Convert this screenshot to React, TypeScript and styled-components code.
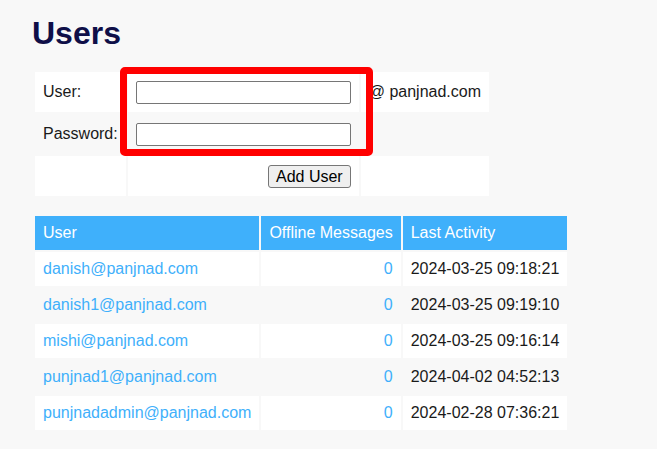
import React from "react";
import styled, { createGlobalStyle } from "styled-components";

const Global = createGlobalStyle`
  html, body {
    margin: 0;
    padding: 0;
    background: #f8f8f8;
    font-family: "Liberation Sans", Arial, sans-serif;
    font-size: 16px;
    color: #1a1a1a;
  }
`;

const Page = styled.div`
  padding: 15px 0 0 33px;
`;

const Title = styled.h1`
  margin: 0 0 18px -1px;
  font-size: 32px;
  line-height: 37px;
  font-weight: bold;
  color: #0f0f48;
`;

const FormWrap = styled.div`
  position: relative;
  width: fit-content;
  margin-bottom: 16px;
`;

const Table = styled.table`
  border-collapse: separate;
  border-spacing: 2px;
`;

const Row = styled.tr<{ $alt?: boolean }>`
  background: ${(p) => (p.$alt ? "transparent" : "#ffffff")};
`;

const FormCell = styled.td<{ $right?: boolean }>`
  height: 24px;
  padding: 8px;
  vertical-align: middle;
  text-align: ${(p) => (p.$right ? "right" : "left")};
  white-space: nowrap;
`;

const TextInput = styled.input`
  box-sizing: border-box;
  width: 215px;
  height: 23px;
  margin: 0;
  padding: 1px 2px;
  border: 1px solid #767676;
  border-radius: 2px;
  background: #fff;
  font: inherit;
  vertical-align: middle;
`;

const Button = styled.button`
  box-sizing: border-box;
  height: 23px;
  margin: 0;
  padding: 0 7px;
  border: 1px solid #767676;
  border-radius: 3px;
  background: #efefef;
  color: #000;
  font-family: "Liberation Sans", Arial, sans-serif;
  font-size: 16px;
  line-height: 21px;
  vertical-align: middle;
`;

const Highlight = styled.div`
  position: absolute;
  left: 87px;
  top: -3px;
  width: 253px;
  height: 89px;
  box-sizing: border-box;
  border: 7px solid #ff0000;
  border-radius: 5px;
  pointer-events: none;
`;

const Head = styled.th`
  background: #3fb0fb;
  color: #ffffff;
  font-weight: normal;
  text-align: left;
  padding: 8px;
  line-height: 18px;
  white-space: nowrap;
`;

const Cell = styled.td<{ $right?: boolean }>`
  padding: 8px;
  line-height: 18px;
  text-align: ${(p) => (p.$right ? "right" : "left")};
  white-space: nowrap;
`;

const Link = styled.a`
  color: #3fb0fb;
  text-decoration: none;
`;

const users = [
  { user: "danish@panjnad.com", offline: 0, last: "2024-03-25 09:18:21" },
  { user: "danish1@panjnad.com", offline: 0, last: "2024-03-25 09:19:10" },
  { user: "mishi@panjnad.com", offline: 0, last: "2024-03-25 09:16:14" },
  { user: "punjnad1@panjnad.com", offline: 0, last: "2024-04-02 04:52:13" },
  { user: "punjnadadmin@panjnad.com", offline: 0, last: "2024-02-28 07:36:21" },
];

export default function App() {
  return (
    <>
      <Global />
      <Page>
        <Title>Users</Title>
        <FormWrap>
          <Table>
            <tbody>
              <Row>
                <FormCell>User:</FormCell>
                <FormCell>
                  <TextInput type="text" />
                </FormCell>
                <FormCell>@ panjnad.com</FormCell>
              </Row>
              <Row $alt>
                <FormCell>Password:</FormCell>
                <FormCell>
                  <TextInput type="password" />
                </FormCell>
                <FormCell />
              </Row>
              <Row>
                <FormCell />
                <FormCell $right>
                  <Button type="button">Add User</Button>
                </FormCell>
                <FormCell />
              </Row>
            </tbody>
          </Table>
          <Highlight />
        </FormWrap>
        <Table>
          <thead>
            <tr>
              <Head>User</Head>
              <Head>Offline Messages</Head>
              <Head>Last Activity</Head>
            </tr>
          </thead>
          <tbody>
            {users.map((u, i) => (
              <Row key={u.user} $alt={i % 2 === 1}>
                <Cell>
                  <Link href="#">{u.user}</Link>
                </Cell>
                <Cell $right>
                  <Link href="#">{u.offline}</Link>
                </Cell>
                <Cell>{u.last}</Cell>
              </Row>
            ))}
          </tbody>
        </Table>
      </Page>
    </>
  );
}
